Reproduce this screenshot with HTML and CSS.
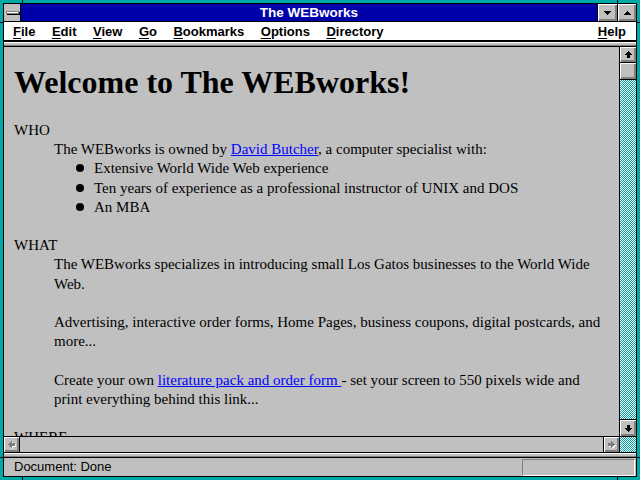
FILE: index.html
```html
<!DOCTYPE html>
<html>
<head>
<meta charset="utf-8">
<title>The WEBworks</title>
<link rel="stylesheet" href="styles.css">
</head>
<body>
<div class="window">
  <div class="frame">
    <div class="titlebar">
      <div class="sysbtn"><span class="sysbar"></span></div>
      <div class="title">The WEBworks</div>
      <div class="tbtn minbtn">
        <svg width="7" height="4" viewBox="0 0 7 4" shape-rendering="crispEdges"><rect x="0" y="0" width="7" height="1"/><rect x="1" y="1" width="5" height="1"/><rect x="2" y="2" width="3" height="1"/><rect x="3" y="3" width="1" height="1"/></svg>
      </div>
      <div class="tbtn maxbtn">
        <svg width="7" height="4" viewBox="0 0 7 4" shape-rendering="crispEdges"><rect x="3" y="0" width="1" height="1"/><rect x="2" y="1" width="3" height="1"/><rect x="1" y="2" width="5" height="1"/><rect x="0" y="3" width="7" height="1"/></svg>
      </div>
    </div>
    <div class="menubar">
      <span class="mi"><u>F</u>ile</span>
      <span class="mi"><u>E</u>dit</span>
      <span class="mi"><u>V</u>iew</span>
      <span class="mi"><u>G</u>o</span>
      <span class="mi"><u>B</u>ookmarks</span>
      <span class="mi"><u>O</u>ptions</span>
      <span class="mi"><u>D</u>irectory</span>
      <span class="mi help"><u>H</u>elp</span>
    </div>
    <div class="sep"></div>
    <div class="main">
      <div class="doc">
        <h1>Welcome to The WEBworks!</h1>
        <dl>
          <dt>WHO</dt>
          <dd>The WEBworks is owned by <a href="#">David Butcher</a>, a computer specialist with:
            <ul>
              <li>Extensive World Wide Web experience</li>
              <li>Ten years of experience as a professional instructor of UNIX and DOS</li>
              <li>An MBA</li>
            </ul>
          </dd>
          <dt class="sect">WHAT</dt>
          <dd>
            <p>The WEBworks specializes in introducing small Los Gatos businesses to the World Wide Web.</p>
            <p>Advertising, interactive order forms, Home Pages, business coupons, digital postcards, and more...</p>
            <p>Create your own <a href="#">literature pack and order form </a> - set your screen to 550 pixels wide and print everything behind this link...</p>
          </dd>
          <dt class="sect">WHERE</dt>
        </dl>
      </div>
      <div class="vscroll">
        <div class="btn vup">
          <svg width="7" height="7" viewBox="0 0 7 7" shape-rendering="crispEdges"><rect x="3" y="0" width="1" height="1"/><rect x="2" y="1" width="3" height="1"/><rect x="1" y="2" width="5" height="1"/><rect x="0" y="3" width="7" height="1"/><rect x="2" y="4" width="3" height="3"/></svg>
        </div>
        <div class="btn thumb"></div>
        <div class="dither vtrack"></div>
        <div class="btn vdown">
          <svg width="7" height="7" viewBox="0 0 7 7" shape-rendering="crispEdges"><rect x="2" y="0" width="3" height="3"/><rect x="0" y="3" width="7" height="1"/><rect x="1" y="4" width="5" height="1"/><rect x="2" y="5" width="3" height="1"/><rect x="3" y="6" width="1" height="1"/></svg>
        </div>
      </div>
    </div>
    <div class="hscroll">
      <div class="btn hleft">
        <svg width="8" height="8" viewBox="0 0 8 8" shape-rendering="crispEdges">
          <g fill="#fff" transform="translate(1,1)"><rect x="0" y="3" width="1" height="1"/><rect x="1" y="2" width="1" height="3"/><rect x="2" y="1" width="1" height="5"/><rect x="3" y="0" width="1" height="7"/><rect x="4" y="2" width="3" height="3"/></g>
          <g fill="#808080"><rect x="0" y="3" width="1" height="1"/><rect x="1" y="2" width="1" height="3"/><rect x="2" y="1" width="1" height="5"/><rect x="3" y="0" width="1" height="7"/><rect x="4" y="2" width="3" height="3"/></g>
        </svg>
      </div>
      <div class="htrack"></div>
      <div class="btn hright">
        <svg width="8" height="8" viewBox="0 0 8 8" shape-rendering="crispEdges">
          <g fill="#fff" transform="translate(1,1)"><rect x="0" y="2" width="3" height="3"/><rect x="3" y="0" width="1" height="7"/><rect x="4" y="1" width="1" height="5"/><rect x="5" y="2" width="1" height="3"/><rect x="6" y="3" width="1" height="1"/></g>
          <g fill="#808080"><rect x="0" y="2" width="3" height="3"/><rect x="3" y="0" width="1" height="7"/><rect x="4" y="1" width="1" height="5"/><rect x="5" y="2" width="1" height="3"/><rect x="6" y="3" width="1" height="1"/></g>
        </svg>
      </div>
      <div class="dither corner"></div>
    </div>
    <div class="sep"></div>
    <div class="statusbar">
      <span class="status-text">Document: Done</span>
      <span class="progress"></span>
    </div>
  </div>
  <span class="notch nt1"></span>
  <span class="notch nt2"></span>
  <span class="notch nb1"></span>
  <span class="notch nb2"></span>
  <span class="notch nl1"></span>
  <span class="notch nl2"></span>
  <span class="notch nr1"></span>
  <span class="notch nr2"></span>
</div>
</body>
</html>
```

FILE: styles.css
```css
html, body {
  margin: 0;
  padding: 0;
  width: 640px;
  height: 480px;
  overflow: hidden;
}

.window {
  position: relative;
  width: 640px;
  height: 480px;
  box-sizing: border-box;
  padding: 3px;
  background: #00a8a8;
}

.frame {
  height: 100%;
  box-sizing: border-box;
  border: 1px solid #000;
  display: flex;
  flex-direction: column;
  background: #c0c0c0;
}

/* title bar */
.titlebar {
  flex: none;
  display: flex;
  height: 17px;
  border-bottom: 1px solid #000;
  background: #0000a8;
}

.sysbtn {
  width: 17px;
  border-right: 1px solid #000;
  background: #c0c0c0;
  display: flex;
  align-items: flex-start;
  padding-top: 7px;
  padding-left: 2px;
  box-sizing: border-box;
  flex: none;
}

.sysbar {
  display: block;
  width: 11px;
  height: 1px;
  background: #fff;
  border: 1px solid #808080;
  box-shadow: 1px 1px 0 #000;
}

.title {
  flex: 1;
  text-align: center;
  color: #fff;
  font: bold 13.5px/17px "Liberation Sans", Arial, sans-serif;
}

.tbtn {
  flex: none;
  width: 19px;
  border-left: 1px solid #000;
  background: #c0c0c0;
  box-shadow: inset 1px 1px #fff, inset -1px -1px #808080, inset -2px -2px #808080;
  display: flex;
  align-items: center;
  justify-content: center;
}

.maxbtn {
  width: 18px;
}

.tbtn svg {
  display: block;
}

/* menu bar */
.menubar {
  flex: none;
  display: flex;
  gap: 16.5px;
  height: 16px;
  padding: 2px 10px 0 9px;
  background: #fff;
  border-bottom: 2px solid #000;
  font: bold 13px/15px "Liberation Sans", Arial, sans-serif;
  color: #000;
  white-space: nowrap;
}

.mi u {
  text-decoration: underline;
  text-underline-offset: 2px;
}

.help {
  margin-left: auto;
}

.sep {
  flex: none;
  height: 3px;
  background: #c0c0c0;
  border-top: 1px solid #fff;
  border-bottom: 1px solid #000;
  box-shadow: inset 0 -1px #808080;
}

/* main area */
.main {
  flex: 1;
  min-height: 0;
  display: flex;
}

.doc {
  flex: 1;
  min-width: 0;
  overflow: hidden;
  padding: 0 10px;
  font: 15px/19.2px "Liberation Serif", "Times New Roman", serif;
  color: #000;
}

.doc h1 {
  margin: 17px 0 20px;
  font: bold 32px/37px "Liberation Serif", "Times New Roman", serif;
}

.doc dl {
  margin: 0;
}

.doc dt.sect {
  margin-top: 19.2px;
}

.doc dd {
  margin: 0 0 0 40px;
}

.doc p {
  margin: 0;
}

.doc p + p {
  margin-top: 19.2px;
}

.doc a {
  color: #0000ff;
  text-decoration: underline;
}

.doc ul {
  margin: 0;
  padding-left: 40px;
  list-style: none;
}

.doc li::before {
  content: "";
  display: inline-block;
  width: 8px;
  height: 8px;
  border-radius: 50%;
  background: #000;
  margin: 0 10px 1px -18px;
}

/* buttons */
.btn {
  background: #c0c0c0;
  box-shadow: inset 1px 1px #fff, inset -1px -1px #808080, inset -2px -2px #808080;
  display: flex;
  align-items: center;
  justify-content: center;
  flex: none;
}

.btn svg {
  display: block;
}

.dither {
  background-color: #fff;
  background-image: repeating-conic-gradient(#00a8a8 0 25%, #fff 0 50%);
  background-size: 2px 2px;
}

/* vertical scrollbar */
.vscroll {
  flex: none;
  width: 16px;
  border-left: 1px solid #000;
  display: flex;
  flex-direction: column;
}

.vup {
  height: 15px;
  border-bottom: 1px solid #000;
}

.thumb {
  height: 16px;
  border-bottom: 1px solid #000;
}

.vtrack {
  flex: 1;
}

.vdown {
  height: 16px;
  border-top: 1px solid #000;
}

/* horizontal scrollbar */
.hscroll {
  flex: none;
  display: flex;
  height: 15px;
  border-top: 1px solid #000;
  border-bottom: 1px solid #000;
}

.hleft {
  width: 15px;
  border-right: 1px solid #000;
}

.htrack {
  flex: 1;
  background: #c0c0c0;
}

.hright {
  width: 15px;
  border-left: 1px solid #000;
  border-right: 1px solid #000;
}

.corner {
  flex: none;
  width: 16px;
}

/* status bar */
.statusbar {
  flex: none;
  display: flex;
  align-items: flex-start;
  height: 18px;
  padding-left: 10px;
  font: 13px/16px "Liberation Sans", Arial, sans-serif;
  color: #000;
}

.status-text {
  padding-top: 1px;
}

.progress {
  margin: 1px 1px 0 auto;
  width: 113px;
  height: 17px;
  box-sizing: border-box;
  border: 1px solid;
  border-color: #808080 #fff #fff #808080;
}

/* resize-border notches */
.notch {
  position: absolute;
  background: #000;
}

.nt1, .nt2, .nb1, .nb2 {
  width: 1px;
  height: 3px;
}

.nt1 { top: 0; left: 22px; }
.nt2 { top: 0; left: 617px; }
.nb1 { bottom: 0; left: 22px; }
.nb2 { bottom: 0; left: 617px; }

.nl1, .nl2, .nr1, .nr2 {
  width: 3px;
  height: 1px;
}

.nl1 { left: 0; top: 22px; }
.nl2 { left: 0; top: 457px; }
.nr1 { right: 0; top: 22px; }
.nr2 { right: 0; top: 457px; }
```
